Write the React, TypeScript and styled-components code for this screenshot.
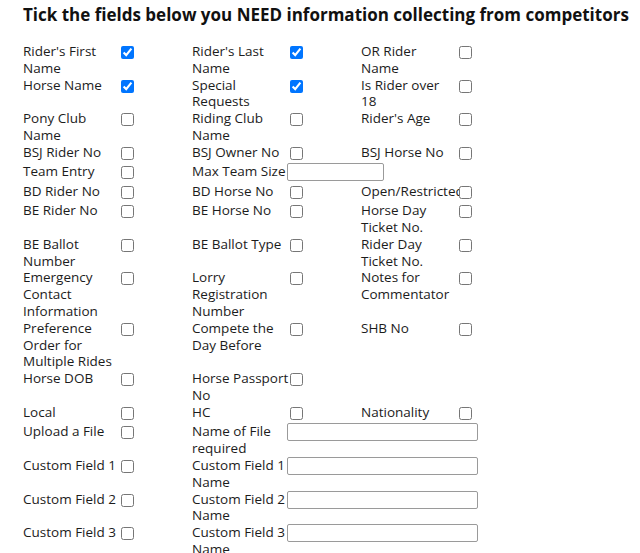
import React from "react";
import styled, { createGlobalStyle } from "styled-components";

const Global = createGlobalStyle`
  html, body { margin: 0; padding: 0; background: #ffffff; }
  body { font-family: "Open Sans", "DejaVu Sans", sans-serif; color: #1a1a1a; }
`;

const Page = styled.div`
  padding: 4px 0 0 23px;
`;

const Title = styled.h1`
  margin: 0 0 17px 0;
  font-size: 17px;
  line-height: 22px;
  font-weight: 700;
  color: #111;
  white-space: nowrap;
`;

const Grid = styled.div`
  display: grid;
  grid-template-columns: repeat(3, 95px 74px);
  align-items: start;
`;

const Label = styled.div`
  font-size: 13.5px;
  line-height: 16.8px;
  white-space: pre;
  color: #1c1c1c;
`;

const ControlCell = styled.div`
  display: flex;
  align-items: flex-start;
  min-height: 16px;
`;

const Check = styled.input.attrs({ type: "checkbox" })`
  display: block;
  flex-shrink: 0;
  width: 13px;
  height: 13px;
  margin: 3px 3px 3.5px 3px;
`;

const TextBox = styled.input.attrs({ type: "text" })<{ $wide?: boolean }>`
  display: block;
  flex-shrink: 0;
  box-sizing: border-box;
  width: ${(p) => (p.$wide ? "191px" : "97px")};
  height: 18px;
  margin: 0;
  padding: 0 2px;
  border: 1px solid #9a9a9a;
  border-radius: 2px;
  background: #fff;
  font-size: 12px;
  position: relative;
  z-index: 1;
`;

type Ctl = "check" | "checked" | "input" | "wide" | "none";
type Cell = [string, Ctl];

const rows: Cell[][] = [
  [["Rider's First\nName", "checked"], ["Rider's Last\nName", "checked"], ["OR Rider\nName", "check"]],
  [["Horse Name", "checked"], ["Special\nRequests", "checked"], ["Is Rider over\n18", "check"]],
  [["Pony Club\nName", "check"], ["Riding Club\nName", "check"], ["Rider's Age", "check"]],
  [["BSJ Rider No", "check"], ["BSJ Owner No", "check"], ["BSJ Horse No", "check"]],
  [["Team Entry", "check"], ["Max Team Size", "input"], ["", "none"]],
  [["BD Rider No", "check"], ["BD Horse No", "check"], ["Open/Restricted", "check"]],
  [["BE Rider No", "check"], ["BE Horse No", "check"], ["Horse Day\nTicket No.", "check"]],
  [["BE Ballot\nNumber", "check"], ["BE Ballot Type", "check"], ["Rider Day\nTicket No.", "check"]],
  [["Emergency\nContact\nInformation", "check"], ["Lorry\nRegistration\nNumber", "check"], ["Notes for\nCommentator", "check"]],
  [["Preference\nOrder for\nMultiple Rides", "check"], ["Compete the\nDay Before", "check"], ["SHB No", "check"]],
  [["Horse DOB", "check"], ["Horse Passport\nNo", "check"], ["", "none"]],
  [["Local", "check"], ["HC", "check"], ["Nationality", "check"]],
  [["Upload a File", "check"], ["Name of File\nrequired", "wide"], ["", "none"]],
  [["Custom Field 1", "check"], ["Custom Field 1\nName", "wide"], ["", "none"]],
  [["Custom Field 2", "check"], ["Custom Field 2\nName", "wide"], ["", "none"]],
  [["Custom Field 3", "check"], ["Custom Field 3\nName", "wide"], ["", "none"]],
];

function Control({ kind }: { kind: Ctl }) {
  if (kind === "check") return <Check />;
  if (kind === "checked") return <Check defaultChecked />;
  if (kind === "input") return <TextBox />;
  if (kind === "wide") return <TextBox $wide />;
  return null;
}

export default function App() {
  return (
    <Page>
      <Global />
      <Title>Tick the fields below you NEED information collecting from competitors</Title>
      <Grid>
        {rows.map((row, ri) =>
          row.map(([label, kind], ci) => (
            <React.Fragment key={`${ri}-${ci}`}>
              <Label>{label}</Label>
              <ControlCell>
                <Control kind={kind} />
              </ControlCell>
            </React.Fragment>
          ))
        )}
      </Grid>
    </Page>
  );
}
